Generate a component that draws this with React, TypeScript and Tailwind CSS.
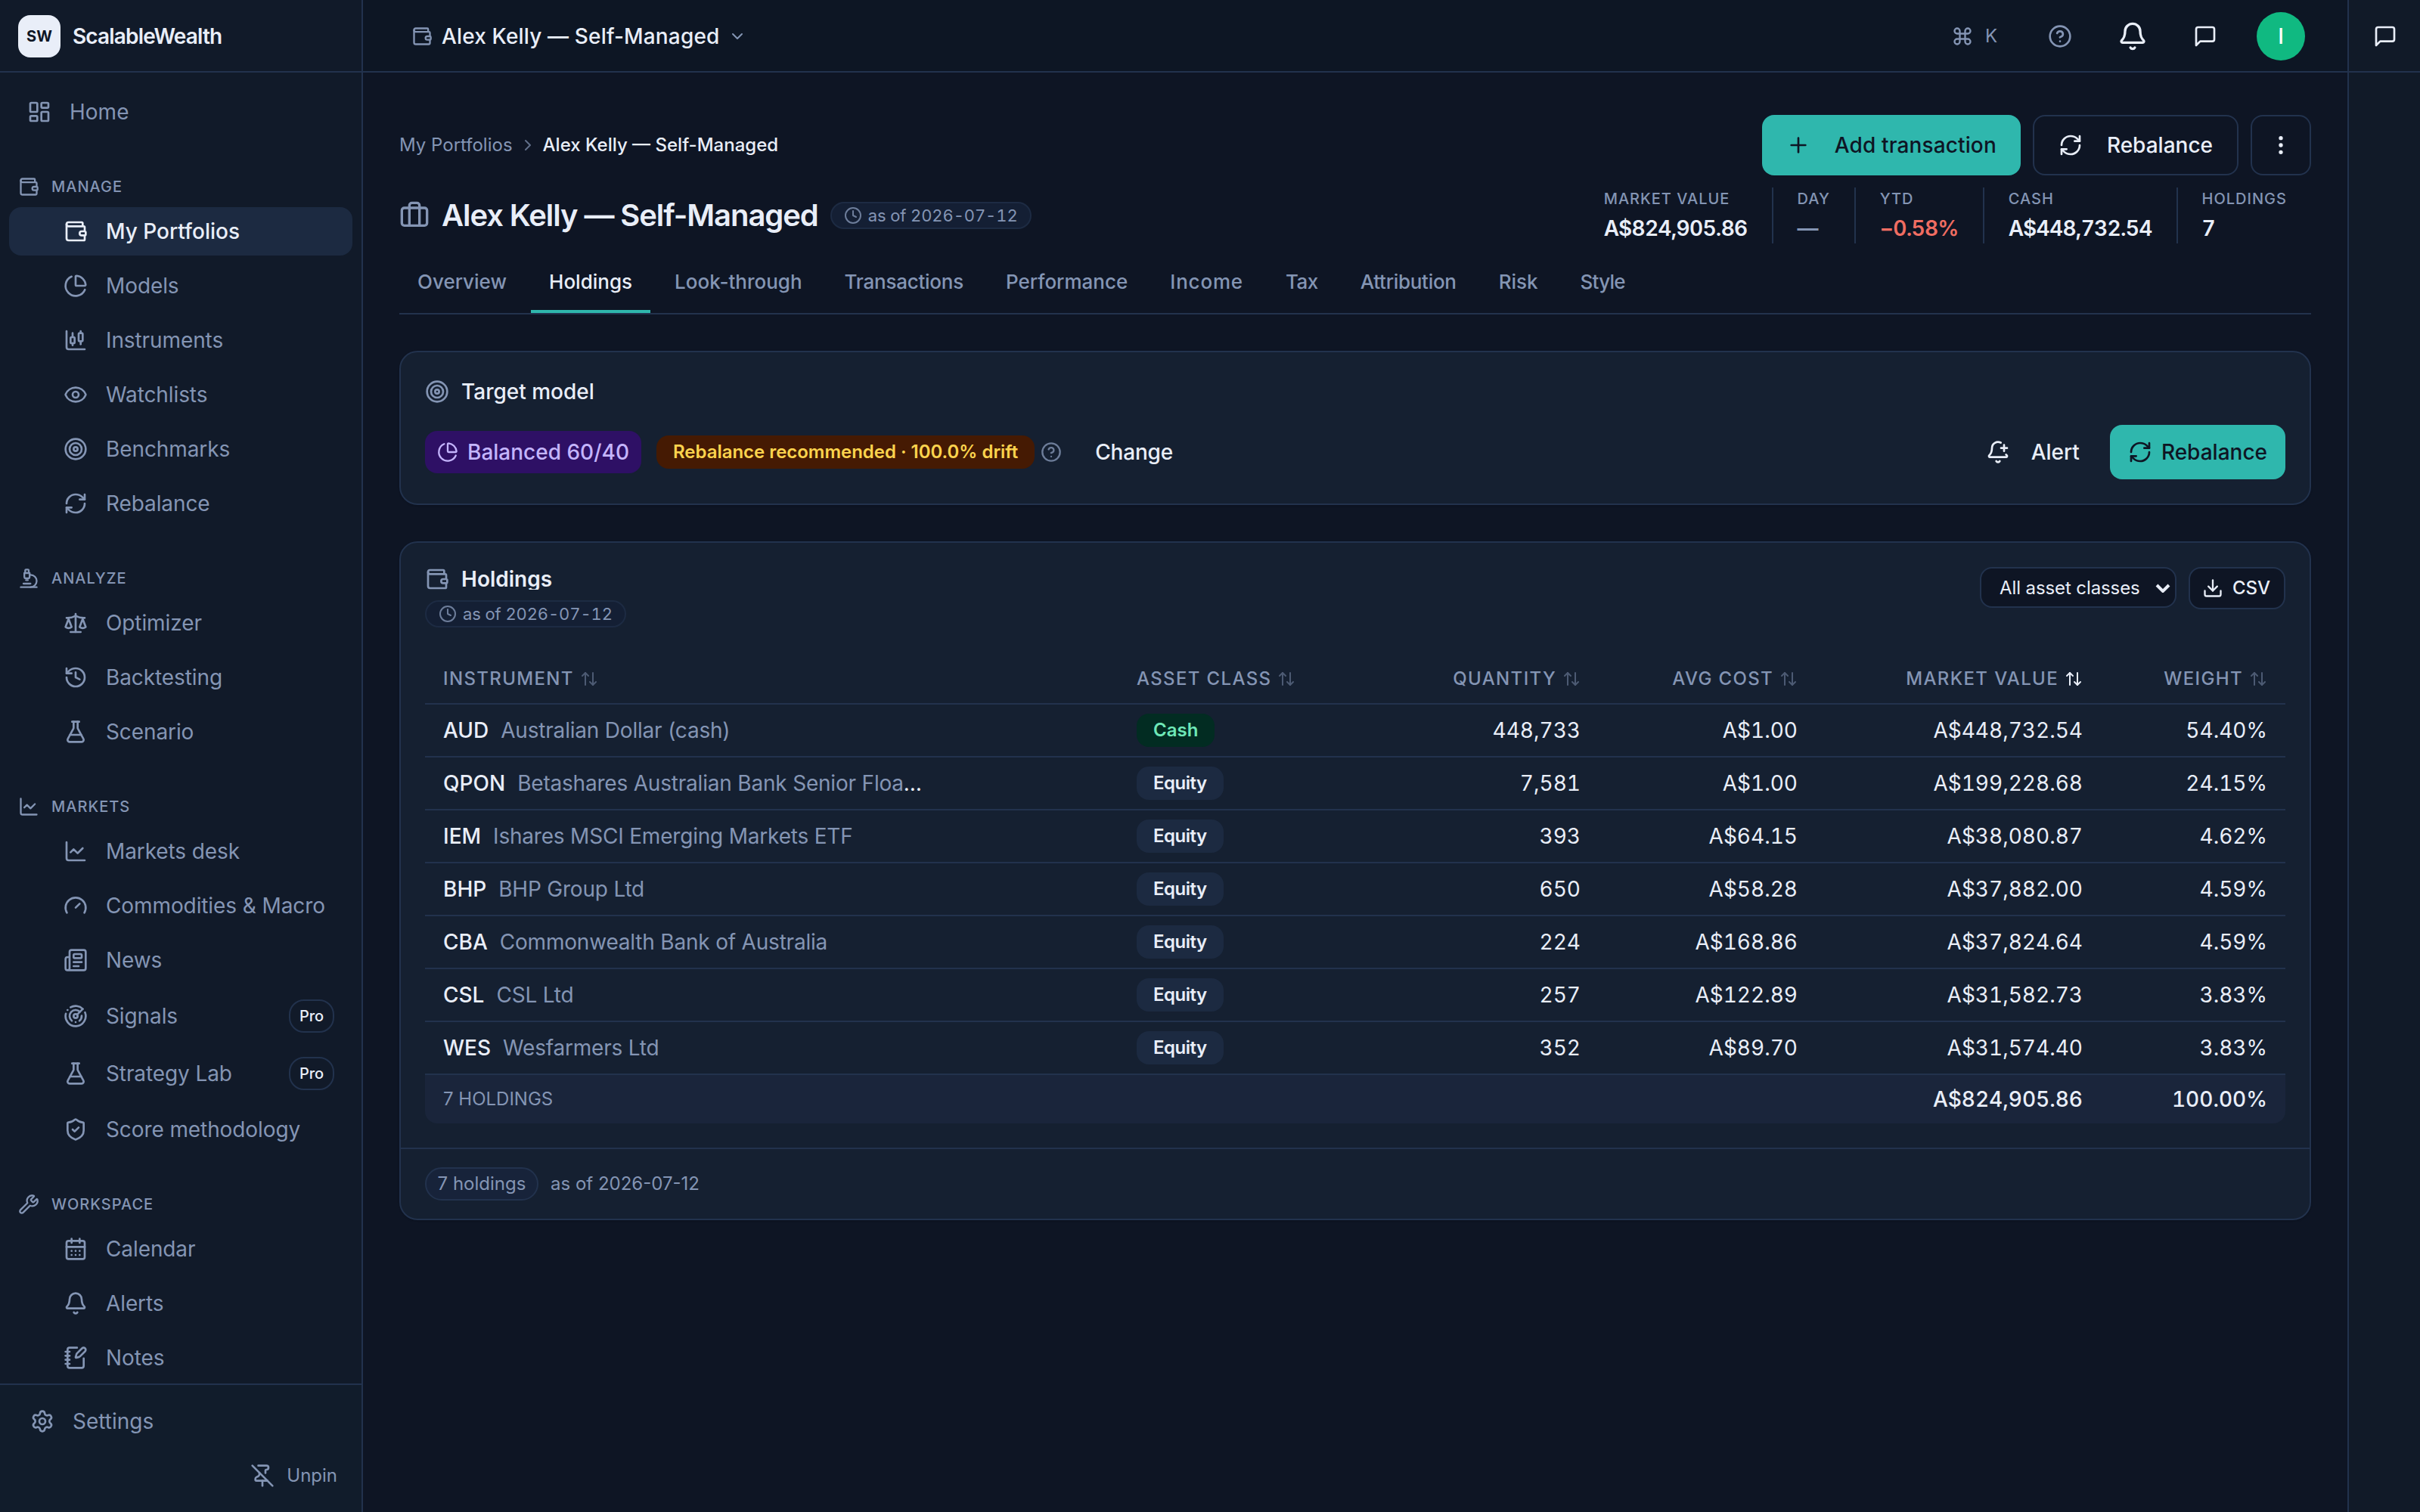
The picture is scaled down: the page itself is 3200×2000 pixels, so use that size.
import type { ReactNode } from 'react';
import {
  ArrowUpDown,
  Bell,
  BellPlus,
  Briefcase,
  CalendarDays,
  ChartCandlestick,
  ChartLine,
  ChevronDown,
  ChevronRight,
  CircleHelp,
  Clock,
  Command,
  Download,
  EllipsisVertical,
  Eye,
  FlaskConical,
  Gauge,
  History,
  LayoutDashboard,
  Microscope,
  Newspaper,
  NotebookPen,
  PieChart,
  PinOff,
  Plus,
  Radar,
  RefreshCw,
  Scale,
  Settings,
  ShieldCheck,
  Target,
  Wallet,
  Wrench,
  type LucideIcon,
} from 'lucide-react';

type NavItem = { label: string; icon: LucideIcon; active?: boolean; pro?: boolean };
type NavGroup = { label: string; icon: LucideIcon; items: NavItem[] };

const navGroups: NavGroup[] = [
  {
    label: 'Manage',
    icon: Wallet,
    items: [
      { label: 'My Portfolios', icon: Wallet, active: true },
      { label: 'Models', icon: PieChart },
      { label: 'Instruments', icon: ChartCandlestick },
      { label: 'Watchlists', icon: Eye },
      { label: 'Benchmarks', icon: Target },
      { label: 'Rebalance', icon: RefreshCw },
    ],
  },
  {
    label: 'Analyze',
    icon: Microscope,
    items: [
      { label: 'Optimizer', icon: Scale },
      { label: 'Backtesting', icon: History },
      { label: 'Scenario', icon: FlaskConical },
    ],
  },
  {
    label: 'Markets',
    icon: ChartLine,
    items: [
      { label: 'Markets desk', icon: ChartLine },
      { label: 'Commodities & Macro', icon: Gauge },
      { label: 'News', icon: Newspaper },
      { label: 'Signals', icon: Radar, pro: true },
      { label: 'Strategy Lab', icon: FlaskConical, pro: true },
      { label: 'Score methodology', icon: ShieldCheck },
    ],
  },
  {
    label: 'Workspace',
    icon: Wrench,
    items: [
      { label: 'Calendar', icon: CalendarDays },
      { label: 'Alerts', icon: Bell },
      { label: 'Notes', icon: NotebookPen },
    ],
  },
];

const stats = [
  { label: 'Market value', value: 'A$824,905.86', tone: 'text-[#e9eef8]' },
  { label: 'Day', value: '—', tone: 'text-[#8495b4]' },
  { label: 'YTD', value: '−0.58%', tone: 'text-[#f06d62]' },
  { label: 'Cash', value: 'A$448,732.54', tone: 'text-[#e9eef8]' },
  { label: 'Holdings', value: '7', tone: 'text-[#e9eef8]' },
];

const tabs = [
  { label: 'Overview' },
  { label: 'Holdings', active: true },
  { label: 'Look-through' },
  { label: 'Transactions', tracking: 'tracking-[-0.25px]' },
  { label: 'Performance' },
  { label: 'Income', tracking: 'tracking-[0.8px]' },
  { label: 'Tax', tracking: 'tracking-[-0.5px]' },
  { label: 'Attribution', tracking: 'tracking-[-0.3px]' },
  { label: 'Risk' },
  { label: 'Style', tracking: 'tracking-[-0.8px]' },
];

const columns = [
  { label: 'Instrument', right: false },
  { label: 'Asset class', right: false },
  { label: 'Quantity', right: true },
  { label: 'Avg cost', right: true },
  { label: 'Market value', right: true, sorted: true },
  { label: 'Weight', right: true },
];

const holdings = [
  { ticker: 'AUD', name: 'Australian Dollar (cash)', kind: 'Cash', qty: '448,733', cost: 'A$1.00', value: 'A$448,732.54', weight: '54.40%' },
  { ticker: 'QPON', name: 'Betashares Australian Bank Senior Floa', cut: true, kind: 'Equity', qty: '7,581', cost: 'A$1.00', value: 'A$199,228.68', weight: '24.15%' },
  { ticker: 'IEM', name: 'Ishares MSCI Emerging Markets ETF', kind: 'Equity', qty: '393', cost: 'A$64.15', value: 'A$38,080.87', weight: '4.62%' },
  { ticker: 'BHP', name: 'BHP Group Ltd', kind: 'Equity', qty: '650', cost: 'A$58.28', value: 'A$37,882.00', weight: '4.59%' },
  { ticker: 'CBA', name: 'Commonwealth Bank of Australia', kind: 'Equity', qty: '224', cost: 'A$168.86', value: 'A$37,824.64', weight: '4.59%' },
  { ticker: 'CSL', name: 'CSL Ltd', kind: 'Equity', qty: '257', cost: 'A$122.89', value: 'A$31,582.73', weight: '3.83%' },
  { ticker: 'WES', name: 'Wesfarmers Ltd', kind: 'Equity', qty: '352', cost: 'A$89.70', value: 'A$31,574.40', weight: '3.83%' },
];

function ChatIcon({ className = '' }: { className?: string }) {
  return (
    <svg
      width="32"
      height="32"
      viewBox="0 0 24 24"
      fill="none"
      stroke="currentColor"
      strokeWidth="2"
      strokeLinecap="round"
      strokeLinejoin="round"
      className={className}
    >
      <path d="M21 15a2 2 0 0 1-2 2H7l-4 4V5a2 2 0 0 1 2-2h14a2 2 0 0 1 2 2z" />
    </svg>
  );
}

function NavRow({ item }: { item: NavItem }) {
  const Icon = item.icon;
  return (
    <a
      className={`flex items-center gap-6 rounded-2xl pl-[72px] pr-6 text-[28px] ${item.pro ? 'h-[68px]' : 'h-16'} ${
        item.active ? 'bg-[#1c2a41] font-medium text-[#e9eef8]' : 'tracking-[-0.1px] text-[#8495b4]'
      }`}
    >
      <Icon size={32} className="shrink-0" />
      <span className="flex-1 whitespace-nowrap">{item.label}</span>
      {item.pro && (
        <span className="flex h-11 w-[60px] items-center justify-center rounded-[20px] border-2 border-[#22324d] text-[20px] font-medium text-[#e9eef8]">
          Pro
        </span>
      )}
    </a>
  );
}

function Sidebar() {
  return (
    <aside className="flex w-[480px] shrink-0 flex-col border-r-2 border-[#22324d] bg-[#111a29]">
      <div className="flex h-24 shrink-0 items-center gap-4 border-b-2 border-[#22324d] pl-6 pt-0.5">
        <div className="flex size-14 items-center justify-center rounded-2xl bg-[#e9eef8] text-[20px] font-bold text-[#0e1524]">
          SW
        </div>
        <span className="text-[28px] font-semibold tracking-[-0.03em] text-[#e9eef8]">ScalableWealth</span>
      </div>
      <nav className="flex-1 overflow-hidden px-3 pt-5">
        <a className="flex h-16 items-center gap-6 pl-6 text-[28px] text-[#8495b4]">
          <LayoutDashboard size={32} />
          Home
        </a>
        {navGroups.map((group) => (
          <section key={group.label} className="mt-10">
            <h3 className="flex h-[54px] items-center gap-4 pl-3 text-[20px] font-medium uppercase tracking-[0.05em] text-[#8495b4]">
              <group.icon size={28} />
              {group.label}
            </h3>
            <div className="flex flex-col gap-2">
              {group.items.map((item) => (
                <NavRow key={item.label} item={item} />
              ))}
            </div>
          </section>
        ))}
      </nav>
      <div className="h-[170px] shrink-0 border-t-2 border-[#22324d] bg-[#111c2b] pt-4 text-[#8495b4]">
        <a className="flex h-16 items-center gap-6 pl-10 text-[28px]">
          <Settings size={32} />
          Settings
        </a>
        <button className="ml-auto mr-8 mt-3 flex h-14 items-center gap-4 text-[24px]">
          <PinOff size={32} />
          Unpin
        </button>
      </div>
    </aside>
  );
}

function TopBar() {
  return (
    <header className="flex h-24 shrink-0 items-center border-b-2 border-[#22324d] bg-[#0d1624] pl-16 pr-14 pt-0.5 text-[#e9eef8]">
      <button className="flex items-center text-[28px] font-medium tracking-[0.16px]">
        <Wallet size={28} className="mr-3 text-[#8495b4]" />
        Alex Kelly — Self-Managed
        <ChevronDown size={24} className="ml-3 text-[#8495b4]" />
      </button>
      <div className="ml-auto flex items-center">
        <span className="flex items-center gap-4 text-[24px] text-[#8495b4]">
          <Command size={28} />K
        </span>
        <CircleHelp size={32} className="ml-[67px] text-[#8495b4]" />
        <Bell size={40} className="ml-15" />
        <ChatIcon className="ml-15" />
        <span className="ml-13 flex size-16 items-center justify-center rounded-full bg-[#10b981] text-[28px] font-medium text-white">
          I
        </span>
      </div>
    </header>
  );
}

function AsOfBadge({ className = '' }: { className?: string }) {
  return (
    <span
      className={`flex h-9 w-fit items-center gap-2 whitespace-nowrap rounded-full border-2 border-[#1d2b43] bg-[#141f34] px-4 text-[22px] tracking-[-0.12px] tabular-nums text-[#8495b4] ${className}`}
    >
      <Clock size={24} className="opacity-80" />
      as of 2026-07-12
    </span>
  );
}

function PageHeader() {
  return (
    <div>
      <div className="flex h-20 items-center justify-between">
        <div className="flex items-center text-[24px]">
          <span className="text-[#8495b4]">My Portfolios</span>
          <ChevronRight size={24} className="mx-2 text-[#8495b4] opacity-70" />
          <span className="font-medium text-[#e9eef8]">Alex Kelly — Self-Managed</span>
        </div>
        <div className="flex gap-4 text-[28px] font-medium text-[#e9eef8]">
          <button className="flex h-20 items-center gap-8 rounded-2xl bg-[#2fb7ad] px-8 tracking-[0.13px] text-[#0e1524]">
            <Plus size={32} />
            Add transaction
          </button>
          <button className="flex h-20 items-center gap-8 rounded-2xl border-2 border-[#22324d] px-8">
            <RefreshCw size={32} />
            Rebalance
          </button>
          <button className="flex size-20 items-center justify-center rounded-2xl border-2 border-[#22324d]">
            <EllipsisVertical size={32} />
          </button>
        </div>
      </div>
      <div className="mt-4 flex items-center justify-between">
        <div className="flex items-center text-[#e9eef8]">
          <Briefcase size={40} className="mr-4 text-[#8495b4]" />
          <h1 className="text-[40px] font-semibold tracking-[-1.08px]">Alex Kelly — Self-Managed</h1>
          <AsOfBadge className="ml-4" />
        </div>
        <dl className="flex h-[74px] divide-x-2 divide-[#22324d]">
          {stats.map((s) => (
            <div key={s.label} className="px-8">
              <dt className="text-[20px] font-medium uppercase leading-[30px] tracking-[0.05em] text-[#8495b4]">{s.label}</dt>
              <dd className={`mt-1 text-[28px] font-semibold leading-10 tracking-[-0.025em] tabular-nums ${s.tone}`}>{s.value}</dd>
            </div>
          ))}
        </dl>
      </div>
      <div className="mt-[10px] flex h-[84px] gap-2 border-b-2 border-[#22324d] text-[26px] font-medium text-[#8495b4]">
        {tabs.map((tab) => (
          <button
            key={tab.label}
            className={`h-[82px] border-b-4 px-6 pt-0.5 ${tab.tracking ?? ''} ${
              tab.active ? 'border-[#2fb7ad] text-[#e9eef8]' : 'border-transparent'
            }`}
          >
            {tab.label}
          </button>
        ))}
      </div>
    </div>
  );
}

function Card({ children }: { children: ReactNode }) {
  return <section className="mt-12 rounded-3xl border-2 border-[#22324d] bg-[#152031] shadow-sm">{children}</section>;
}

function TargetModel() {
  return (
    <Card>
      <div className="p-8 text-[28px] font-medium text-[#e9eef8]">
        <h2 className="flex h-10 items-center gap-4">
          <Target size={32} className="text-[#8495b4]" />
          Target model
        </h2>
        <div className="mt-6 flex h-18 items-center">
          <span className="flex h-14 items-center gap-3 rounded-2xl bg-[#2e1065] px-4 text-[#c4b5fd]">
            <PieChart size={28} />
            Balanced 60/40
          </span>
          <span className="ml-5 flex h-11 items-center rounded-2xl bg-[#451a03] px-[22px] text-[24px] font-semibold tracking-[-0.03px] text-[#fcd34d]">
            Rebalance recommended · 100.0% drift
          </span>
          <CircleHelp size={28} className="ml-2 text-[#8495b4] opacity-80" />
          <button className="ml-11 tracking-[-0.2px]">Change</button>
          <button className="ml-auto flex items-center gap-7">
            <BellPlus size={32} />
            Alert
          </button>
          <button className="ml-10 flex h-18 items-center gap-3 rounded-2xl bg-[#2fb7ad] px-6 text-[#0e1524]">
            <RefreshCw size={32} />
            Rebalance
          </button>
        </div>
      </div>
    </Card>
  );
}

function HoldingsTable() {
  return (
    <table className="mt-8 w-full table-fixed border-separate border-spacing-0 text-[28px] text-[#e9eef8]">
      <colgroup>
        <col className="w-[917px]" />
        <col className="w-[359px]" />
        <col className="w-[276px]" />
        <col className="w-[287px]" />
        <col className="w-[377px]" />
        <col className="w-[244px]" />
      </colgroup>
      <thead>
        <tr>
          {columns.map((c) => (
            <th key={c.label} className="h-[70px] border-b-2 border-[#22324d] px-6 pb-0 pt-1">
              <span
                className={`flex items-center gap-2 whitespace-nowrap text-[24px] font-medium uppercase tracking-[1.35px] text-[#8495b4] ${
                  c.right ? 'justify-end' : ''
                }`}
              >
                {c.label}
                <ArrowUpDown size={24} className={c.sorted ? 'text-[#e9eef8]' : 'opacity-50'} />
              </span>
            </th>
          ))}
        </tr>
      </thead>
      <tbody>
        {holdings.map((h) => (
          <tr key={h.ticker} className="[&>td]:h-[70px] [&>td]:border-b-2 [&>td]:border-[#22324d] [&>td]:px-6 [&>td]:py-0">
            <td className="whitespace-nowrap">
              <span className="font-medium">{h.ticker}</span>
              <span className="ml-4 tracking-[-0.2px] text-[#8495b4]">{h.name}</span>
              {h.cut && '…'}
            </td>
            <td>
              <span
                className={`flex h-11 w-fit items-center rounded-2xl px-[22px] text-[24px] font-semibold ${
                  h.kind === 'Cash' ? 'bg-[#022c22] text-[#6ee7b7]' : 'bg-[#1c2a41] tracking-[-0.5px]'
                }`}
              >
                {h.kind}
              </span>
            </td>
            <td className="text-right tabular-nums">{h.qty}</td>
            <td className="text-right tabular-nums">{h.cost}</td>
            <td className="text-right tabular-nums">{h.value}</td>
            <td className="text-right tabular-nums">{h.weight}</td>
          </tr>
        ))}
      </tbody>
      <tfoot>
        <tr className="[&>td]:h-16 [&>td]:bg-[#1a253b] [&>td]:px-6 [&>td]:py-0">
          <td colSpan={4} className="rounded-bl-2xl text-[24px] uppercase text-[#8495b4]">
            7 holdings
          </td>
          <td className="text-right font-medium tabular-nums">A$824,905.86</td>
          <td className="rounded-br-2xl text-right font-medium tabular-nums">100.00%</td>
        </tr>
      </tfoot>
    </table>
  );
}

function Holdings() {
  return (
    <Card>
      <div className="p-8">
        <div className="flex h-20 items-start justify-between text-[#e9eef8]">
          <div>
            <h2 className="flex h-8 items-center gap-4 text-[28px] font-semibold">
              <Wallet size={32} className="text-[#8495b4]" />
              <span className="overflow-hidden leading-none">Holdings</span>
            </h2>
            <AsOfBadge className="mt-3" />
          </div>
          <div className="flex items-start gap-4 text-[24px]">
            <button className="flex h-[54px] w-[260px] items-center justify-between whitespace-nowrap rounded-2xl border-2 border-[#22324d] bg-[#0e1524] pl-6 pr-[6px] pt-0.5 tracking-[-0.1px]">
              All asset classes
              <svg width="20" height="12" viewBox="0 0 20 12" fill="none" stroke="currentColor" strokeWidth="4">
                <path d="M2 2l8 8 8-8" />
              </svg>
            </button>
            <button className="flex h-14 w-32 items-center gap-3 rounded-2xl border-2 border-[#22324d] bg-[#0e1524] px-4 font-medium">
              <Download size={28} />
              CSV
            </button>
          </div>
        </div>
        <HoldingsTable />
      </div>
      <footer className="flex h-[94px] items-center gap-4 border-t-2 border-[#22324d] px-8 text-[24px] text-[#8495b4]">
        <span className="flex h-11 w-[150px] items-center justify-center whitespace-nowrap rounded-full border-2 border-[#22324d] bg-[#17233a]">
          7 holdings
        </span>
        as of 2026-07-12
      </footer>
    </Card>
  );
}

export default function App() {
  return (
    <div className="flex h-[2000px] w-[3200px] overflow-hidden bg-[#0e1524] font-['Inter',sans-serif]">
      <Sidebar />
      <div className="flex min-w-0 flex-1 flex-col">
        <TopBar />
        <main className="px-12 pt-14">
          <PageHeader />
          <TargetModel />
          <Holdings />
        </main>
      </div>
      <aside className="w-24 shrink-0 border-l-2 border-[#22324d] bg-[#111a28]">
        <div className="flex h-24 items-center justify-center border-b-2 border-[#22324d] pl-0.5 pt-0.5 text-[#e9eef8]">
          <ChatIcon />
        </div>
      </aside>
    </div>
  );
}
